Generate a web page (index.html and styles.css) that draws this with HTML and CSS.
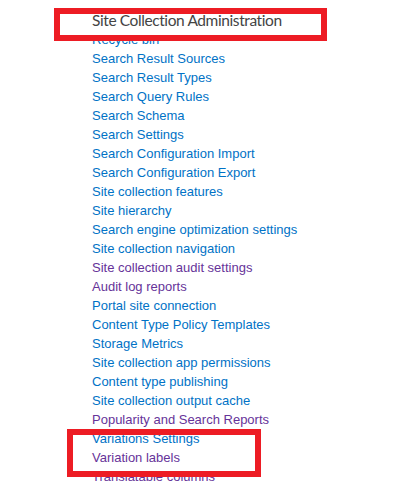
FILE: index.html
```html
<!DOCTYPE html>
<html lang="en">
<head>
  <meta charset="UTF-8" />
  <title>Site Collection Administration</title>
  <link rel="stylesheet" href="styles.css">
</head>
<body>
  <div class="page">
    <h2 class="group-title">Site Collection Administration</h2>
    <ul class="links">
      <li><a href="#">Recycle bin</a></li>
      <li><a href="#">Search Result Sources</a></li>
      <li><a href="#">Search Result Types</a></li>
      <li><a href="#">Search Query Rules</a></li>
      <li><a href="#">Search Schema</a></li>
      <li><a href="#">Search Settings</a></li>
      <li><a href="#">Search Configuration Import</a></li>
      <li><a href="#">Search Configuration Export</a></li>
      <li><a href="#">Site collection features</a></li>
      <li><a href="#">Site hierarchy</a></li>
      <li><a href="#">Search engine optimization settings</a></li>
      <li><a href="#">Site collection navigation</a></li>
      <li><a href="#" class="visited">Site collection audit settings</a></li>
      <li><a href="#" class="visited">Audit log reports</a></li>
      <li><a href="#">Portal site connection</a></li>
      <li><a href="#">Content Type Policy Templates</a></li>
      <li><a href="#">Storage Metrics</a></li>
      <li><a href="#">Site collection app permissions</a></li>
      <li><a href="#">Content type publishing</a></li>
      <li><a href="#">Site collection output cache</a></li>
      <li><a href="#" class="visited">Popularity and Search Reports</a></li>
      <li><a href="#">Variations Settings</a></li>
      <li><a href="#" class="visited">Variation labels</a></li>
      <li><a href="#" class="visited">Translatable columns</a></li>
      <li><a href="#">Variation logs</a></li>
    </ul>

    <!-- highlight boxes drawn over the screenshot -->
    <div class="mark mark-title"></div>
    <div class="mark mark-variations"></div>
  </div>
</body>
</html>
```

FILE: styles.css
```css
html, body {
  margin: 0;
  padding: 0;
  background-color: #fff;
  height: 100%;
  overflow: hidden;
}

.page {
  position: relative;
  padding: 11px 0 0 92px;
}

.group-title {
  margin: 0;
  font-family: Lato, "Open Sans", sans-serif;
  font-weight: 400;
  font-size: 15.5px;
  letter-spacing: -0.4px;
  line-height: 19px;
  color: #444;
  white-space: nowrap;
}

.links {
  list-style: none;
  margin: 0;
  padding: 0;
  font-family: "Liberation Sans", Arial, sans-serif;
  font-size: 13px;
  line-height: 19px;
}

.links a {
  color: #0072c6;
  text-decoration: none;
}

.links a.visited {
  color: #663399;
}

.mark {
  position: absolute;
  border: 6px solid #ed1c24;
  box-sizing: border-box;
}

.mark-title {
  left: 54px;
  top: 8px;
  width: 273px;
  height: 33px;
}

.mark-variations {
  left: 67px;
  top: 429px;
  width: 194px;
  height: 48px;
}
```
